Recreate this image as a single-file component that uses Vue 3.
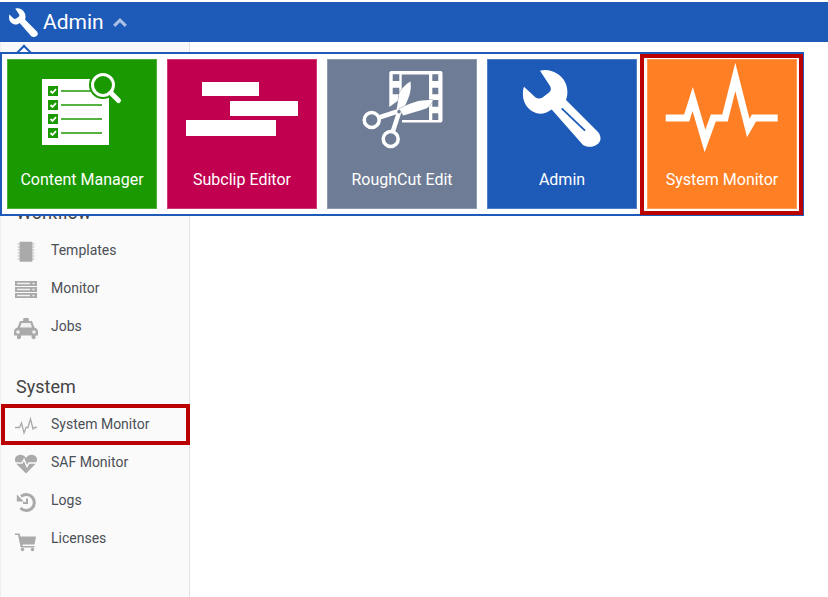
<script setup>
const tiles = [
  { key: 'content', label: 'Content Manager', cls: 'green' },
  { key: 'subclip', label: 'Subclip Editor', cls: 'crimson' },
  { key: 'rough', label: 'RoughCut Edit', cls: 'slate' },
  { key: 'admin', label: 'Admin', cls: 'blue' },
  { key: 'monitor', label: 'System Monitor', cls: 'orange', marked: true }
]
const wrench = 'M53 11.700C62 9 74 14 78.500 24C81 30 81 36 79 41L111 73C115 78 114 83 110 85.500C106 88.500 100 88.500 96 86L64.700 50.500C59 54.500 54 55.500 49 54C41 51.500 36.500 44 36 37C35.800 33 36 30 37 27.700L47.500 37.500C50 40 53 40 55.500 38.500L62 33.500C64 32 64.500 29.500 63 27Z'
const checks = [27, 41, 55, 69]
</script>

<template>
  <div class="page">
    <header class="topbar">
      <svg class="top-wrench" viewBox="36 10 78 78" width="29" height="29"><path :d="wrench" fill="#fff" /></svg>
      <span class="top-title">Admin</span>
      <svg class="top-chevron" viewBox="0 0 14 9" width="14" height="9"><path d="M1.200 7.800L7 2.200L12.800 7.800" fill="none" stroke="#a9bfe4" stroke-width="3.200" /></svg>
    </header>

    <div class="body">
      <aside class="sidebar">
        <h3 class="heading">Workflow</h3>
        <div class="item">
          <svg class="ico" viewBox="0 0 22 26">
            <rect x="4.500" y="4.700" width="13" height="20" rx="1" fill="#aaa" />
            <path d="M2.500 7h2M2.500 10h2M2.500 13h2M2.500 16h2M2.500 19h2M2.500 22h2M17.500 7h2M17.500 10h2M17.500 13h2M17.500 16h2M17.500 19h2M17.500 22h2" stroke="#bbb" stroke-width="1" />
          </svg>
          <span>Templates</span>
        </div>
        <div class="item">
          <svg class="ico" viewBox="0 0 22 26">
            <rect x="0" y="6" width="22" height="5" fill="#aaa" />
            <rect x="0" y="12" width="22" height="5" fill="#aaa" />
            <rect x="0" y="18" width="22" height="5" fill="#aaa" />
            <path d="M2 8.500h13M2 14.500h13M2 20.500h13M17.500 8.500h2M17.500 14.500h2M17.500 20.500h2" stroke="#f0f0f0" stroke-width="1.400" />
          </svg>
          <span>Monitor</span>
        </div>
        <div class="item">
          <svg class="ico" viewBox="0 0 22 26">
            <path d="M8.500 5h5l.5 3h-6zM5 8h12l2.500 6.500c2 .5 3.500 2 3.500 4v4h-2.500v2.500a2 2 0 0 1-2.500 1a2 2 0 0 1-1.500-1.500v-2H6v2a2 2 0 0 1-1.500 1.500a2 2 0 0 1-2.500-1V22.500H-1v-4c0-2 1.500-3.500 3.500-4z" fill="#aaa" />
            <path d="M6.500 10h9l1.500 4.500H5z" fill="#f2f2f2" />
            <circle cx="3" cy="19" r="1.800" fill="#f2f2f2" /><circle cx="19" cy="19" r="1.800" fill="#f2f2f2" />
          </svg>
          <span>Jobs</span>
        </div>

        <h3 class="heading second">System</h3>
        <div class="item">
          <span class="mark-row"></span>
          <svg class="ico" viewBox="0 0 22 26">
            <path d="M0 16.500h4.500L6.500 12L9 22l2-5.500h2L15.500 8L18 18l1.500-1.500H22" fill="none" stroke="#aaa" stroke-width="1.300" />
          </svg>
          <span>System Monitor</span>
        </div>
        <div class="item">
          <svg class="ico" viewBox="0 0 22 26">
            <path d="M11 24.500L2 15.500C-1 12-.5 8 2.500 6.500C5.500 5 9 6 11 9C13 6 16.500 5 19.500 6.500C22.500 8 23 12 20 15.500Z" fill="#aaa" />
            <path d="M0 14h7l2-3.500l3 7l2-3.500h8" fill="none" stroke="#fafafa" stroke-width="1.500" />
          </svg>
          <span>SAF Monitor</span>
        </div>
        <div class="item">
          <svg class="ico" viewBox="0 0 22 26">
            <path d="M6 9.500A8 8 0 1 1 5.500 21" fill="none" stroke="#aaa" stroke-width="3" />
            <path d="M1.800 7.500l7 7h-7z" fill="#aaa" />
            <path d="M12 11.500v4.500h-4" fill="none" stroke="#aaa" stroke-width="2" />
          </svg>
          <span>Logs</span>
        </div>
        <div class="item">
          <svg class="ico" viewBox="0 0 22 26">
            <path d="M0 8.500h4.500l.9 3H21l-1.500 8H7.500l.3 1.500H19.500v1.500H5.700L3 10H0z" fill="#aaa" />
            <circle cx="7.500" cy="24.500" r="1.700" fill="#aaa" /><circle cx="17.500" cy="24.500" r="1.700" fill="#aaa" />
          </svg>
          <span>Licenses</span>
        </div>
      </aside>
      <main class="content"></main>
    </div>

    <div class="drop-arrow"></div>
    <nav class="launcher">
      <div v-for="t in tiles" :key="t.key" class="tile" :class="t.cls">
        <svg class="art" viewBox="0 0 150 104" width="150" height="104">
          <g v-if="t.key === 'content'">
            <rect x="35" y="20" width="67" height="66" fill="#fff" />
            <g v-for="y in checks" :key="y">
              <rect :x="41" :y="y" width="10" height="10" fill="#1a9900" />
              <path :d="`M43.500 ${y + 5}l2 2l3.500-3.800`" fill="none" stroke="#fff" stroke-width="1.800" />
              <path :d="`M54 ${y + 5}H95`" stroke="#1a9900" stroke-width="1.300" />
            </g>
            <circle cx="96" cy="26" r="14" fill="#1a9900" />
            <circle cx="96" cy="26" r="10.500" fill="#1a9900" stroke="#fff" stroke-width="3" />
            <path d="M104 34L111.500 41.500" stroke="#fff" stroke-width="5" stroke-linecap="round" />
          </g>
          <g v-else-if="t.key === 'subclip'" fill="#fff">
            <rect x="35" y="23" width="57" height="14" />
            <rect x="63" y="42" width="68" height="15" />
            <rect x="19" y="61" width="90" height="16" />
          </g>
          <g v-else-if="t.key === 'rough'">
            <path fill-rule="evenodd" fill="#fff" d="M64 12h49.500a2 2 0 0 1 2 2v47.500a2 2 0 0 1-2 2H75v-2.500h27V15.500H74.700V39L62.300 48V14a2 2 0 0 1 1.700-2zM65.700 15.300v6.700h6.600v-6.700zM65.700 28.700v6.600h6.600v-6.600zM105.300 15.300v6.700h6v-6.700zM105.300 28.700v6.600h6v-6.600zM105.300 41v6.700h6V41zM105.300 54.300V61h6v-6.700z" />
            <path d="M83.500 22.500C84.500 30 83 35 81.300 39.300C79.500 44 77.500 48 75.700 52L69.700 50L72.300 34.300C74 30 79 25 83.500 22.500Z" fill="#fff" stroke="#6e7d95" stroke-width="0.800" paint-order="stroke" />
            <path d="M106 41C104 45 103 47 99.700 49.300C92 52 84 54 76.300 56.500L72 50L76.300 47.700C81 45.500 86 43.500 91.300 42C96 41 101 41 106 41Z" fill="#fff" stroke="#6e7d95" stroke-width="0.800" paint-order="stroke" />
            <path d="M72 52L52 58.500" stroke="#fff" stroke-width="4.500" />
            <path d="M72.500 52L66 72" stroke="#fff" stroke-width="4.500" />
            <circle cx="44.700" cy="61" r="7.500" fill="none" stroke="#fff" stroke-width="3.500" />
            <circle cx="63.700" cy="80" r="7.500" fill="none" stroke="#fff" stroke-width="3.500" />
            <circle cx="72" cy="52.700" r="1.800" fill="#6e7d95" />
          </g>
          <g v-else-if="t.key === 'admin'">
            <path :d="wrench" fill="#fff" />
            <path d="M74.700 49.300L98 71.700" stroke="#1e5ab8" stroke-width="1.800" />
          </g>
          <path v-else d="M18.700 59H39.700L45.700 40L58 82L66.300 59H78L88.300 18L101.300 69L107 59H130.700" fill="none" stroke="#fff" stroke-width="7" stroke-miterlimit="10" />
        </svg>
        <span class="label">{{ t.label }}</span>
        <span v-if="t.marked" class="mark-tile"></span>
      </div>
    </nav>
  </div>
</template>

<style scoped>
.page {
  position: relative;
  width: 828px;
  height: 597px;
  padding-top: 2px;
  box-sizing: border-box;
  overflow: hidden;
  background: #fff;
  font-family: Roboto, "Liberation Sans", sans-serif;
}
.topbar {
  display: flex;
  align-items: center;
  height: 40px;
  padding-left: 9px;
  background: #1e5ab8;
  color: #fff;
}
.top-wrench { flex: none; }
.top-title {
  margin-left: 5px;
  font-size: 21px;
  line-height: 40px;
}
.top-chevron { margin-left: 9px; margin-top: 1px; }
.body {
  display: flex;
  height: 555px;
}
.sidebar {
  width: 190px;
  box-sizing: border-box;
  padding-top: 159px;
  background: #fafafa;
  border-left: 1px solid #efefef;
  border-right: 1px solid #e2e2e2;
}
.heading {
  margin: 0 0 6px;
  padding-left: 15px;
  font-size: 18px;
  font-weight: 400;
  line-height: 24px;
  color: #444;
}
.heading.second { margin-top: 30px; }
.item {
  position: relative;
  display: flex;
  align-items: center;
  height: 38px;
  padding-left: 14px;
  font-size: 14px;
  color: #4b4f56;
}
.ico {
  flex: none;
  width: 22px;
  height: 26px;
  margin-right: 14px;
  overflow: visible;
}
.mark-row {
  position: absolute;
  top: -1px;
  left: 0;
  right: -1px;
  bottom: -2px;
  border: 4px solid #bb0000;
}
.content { flex: 1; }
.drop-arrow {
  position: absolute;
  left: 18px;
  top: 47px;
  width: 10px;
  height: 10px;
  background: #fff;
  border-left: 2px solid #1e5ab8;
  border-top: 2px solid #1e5ab8;
  transform: rotate(45deg);
}
.launcher {
  position: absolute;
  left: 0;
  top: 52px;
  display: flex;
  gap: 10px;
  padding: 5px;
  background: #fff;
  border: 2px solid #1e5ab8;
}
.tile {
  position: relative;
  display: flex;
  flex-direction: column;
  align-items: center;
  width: 150px;
  height: 150px;
  box-sizing: border-box;
  color: #fff;
  box-shadow: inset 0 0 0 1px rgba(255, 255, 255, 0.22);
}
.art { flex: none; display: block; overflow: visible; }
.label {
  margin-top: 7px;
  font-size: 16px;
  line-height: 20px;
  white-space: nowrap;
}
.green { background: #1a9900; }
.crimson { background: #c1004f; }
.slate { background: #6e7d95; }
.blue { background: #1e5ab8; }
.orange { background: #ff7f24; }
.mark-tile {
  position: absolute;
  top: -5px;
  left: -7px;
  right: -6px;
  bottom: -6px;
  border: 4px solid #bb0000;
}
</style>
